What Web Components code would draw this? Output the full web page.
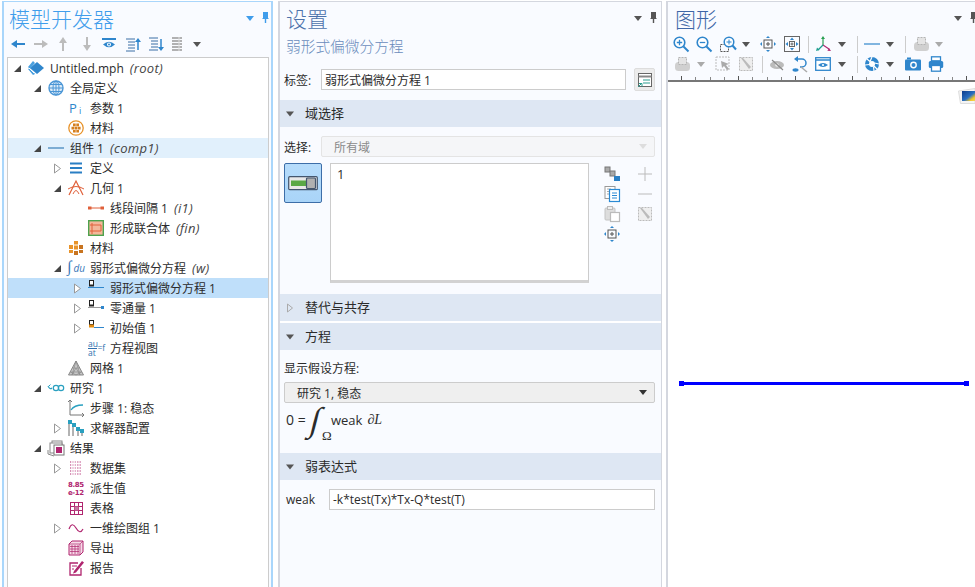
<!DOCTYPE html>
<html lang="zh-CN"><head><meta charset="utf-8"><title>COMSOL</title>
<style>
html,body{margin:0;padding:0;background:#fff;overflow:hidden}
body{font:12px "Open Sans","Noto Sans CJK SC",sans-serif;color:#2b2b2b}
</style></head><body>
<app-shell>
  <side-panel slot="left" title-text="模型开发器" active>
    <tool-bar slot="tools" start="4" items="back@18 fwd@41 up@63 down@87 eye@109 listup@133 listdown@156 listgray@178 caret@197"></tool-bar>
    <model-tree>
      <tree-row level="0" arrow="open" icon="root" tag="(root)">Untitled.mph</tree-row>
      <tree-row level="1" arrow="open" icon="globe">全局定义</tree-row>
      <tree-row level="2" icon="pi">参数 1</tree-row>
      <tree-row level="2" icon="matc">材料</tree-row>
      <tree-row level="1" arrow="open" icon="line" tag="(comp1)" state="soft">组件 1</tree-row>
      <tree-row level="2" arrow="closed" icon="defs">定义</tree-row>
      <tree-row level="2" arrow="open" icon="geom">几何 1</tree-row>
      <tree-row level="3" icon="interval" tag="(i1)">线段间隔 1</tree-row>
      <tree-row level="3" icon="union" tag="(fin)">形成联合体</tree-row>
      <tree-row level="2" icon="mats">材料</tree-row>
      <tree-row level="2" arrow="open" icon="weak" tag="(w)">弱形式偏微分方程</tree-row>
      <tree-row level="3" arrow="closed" icon="wf" state="sel">弱形式偏微分方程 1</tree-row>
      <tree-row level="3" arrow="closed" icon="zf">零通量 1</tree-row>
      <tree-row level="3" arrow="closed" icon="init">初始值 1</tree-row>
      <tree-row level="3" icon="eqv">方程视图</tree-row>
      <tree-row level="2" icon="mesh">网格 1</tree-row>
      <tree-row level="1" arrow="open" icon="study">研究 1</tree-row>
      <tree-row level="2" icon="step">步骤 1: 稳态</tree-row>
      <tree-row level="2" arrow="closed" icon="solver">求解器配置</tree-row>
      <tree-row level="1" arrow="open" icon="results">结果</tree-row>
      <tree-row level="2" arrow="closed" icon="dataset">数据集</tree-row>
      <tree-row level="2" icon="derived">派生值</tree-row>
      <tree-row level="2" icon="table">表格</tree-row>
      <tree-row level="2" arrow="closed" icon="plot">一维绘图组 1</tree-row>
      <tree-row level="2" icon="export">导出</tree-row>
      <tree-row level="2" icon="report">报告</tree-row>
    </model-tree>
  </side-panel>
  <settings-panel slot="mid"></settings-panel>
  <graphics-panel slot="right"></graphics-panel>
</app-shell>
<script>
const B='#2f86cc',G='#bcbcbc',D='#555',R='#e0603a',M='#b0256f',O='#e8932a',T='#2aa0c0';
const DBOX=`<rect x="1.500" y=".500" width="4" height="4.500" fill="#fff" stroke="#222"/><rect x="1" y="5" width="5" height="1.500" fill="#222"/>`;
const ICONS={
back:`<path d="M15 8H5" stroke="${B}" stroke-width="2"/><path d="M1 8l6-4v8z" fill="${B}"/>`,
fwd:`<path d="M1 8h10" stroke="${G}" stroke-width="2"/><path d="M15 8l-6-4v8z" fill="${G}"/>`,
up:`<path d="M8 15V5" stroke="${G}" stroke-width="2"/><path d="M8 1L4 7h8z" fill="${G}"/>`,
down:`<path d="M8 1v10" stroke="${G}" stroke-width="2"/><path d="M8 15L4 9h8z" fill="${G}"/>`,
eye:`<path d="M1 3h14" stroke="${B}" stroke-width="2"/><path d="M2 8.500Q8 3 14 8.500 8 14 2 8.500z" fill="${B}"/><circle cx="8" cy="8.500" r="2" fill="#fff"/><circle cx="8" cy="8.500" r="1" fill="${B}"/>`,
listup:`<path d="M1 3h9M3 6h7M3 9h7M3 12h7M1 15h9" stroke="#3a6ea5" stroke-width="1"/><path d="M13 14V5" stroke="${B}" stroke-width="1.500"/><path d="M13 2l-3 4h6z" fill="${B}"/>`,
listdown:`<path d="M1 2h9M3 5h7M3 8h7M3 11h7M1 14h9" stroke="#3a6ea5" stroke-width="1"/><path d="M13 3v9" stroke="${B}" stroke-width="1.500"/><path d="M13 15l-3-4h6z" fill="${B}"/>`,
listgray:`<path d="M2 2h10M2 5h10M2 8h10M2 11h10M2 14h10" stroke="#999" stroke-width="1.400"/><path d="M9 1v14" stroke="#ddd"/>`,
caret:`<path d="M0 1h8L4 6z" fill="#555"/>`,
caretg:`<path d="M0 1h8L4 6z" fill="#aaa"/>`,
pin:`<path d="M2 0h5v6l1 1H5.200v4H3.800V7H1l1-1z" fill="#555"/>`,
pinb:`<path d="M2 0h5v6l1 1H5.200v4H3.800V7H1l1-1z" fill="#3f9deb"/>`,
caretb:`<path d="M0 1h8L4 6z" fill="#3f9deb"/>`,
root:`<path d="M9 2l7 6-7 6-7-6z" fill="${B}"/><path d="M5 1L0 7l2 2 5-6zM0 9l5 6 2-1-5-6z" fill="#4aa0df"/><path d="M1 8l5 5" stroke="#fff"/>`,
globe:`<circle cx="8" cy="8" r="7" fill="#dcebf8" stroke="#4a96d6" stroke-width="1.400"/><ellipse cx="8" cy="8" rx="3" ry="7" fill="none" stroke="#4a96d6"/><path d="M1 8h14M2 4.500h12M2 11.500h12M8 1v14" stroke="#4a96d6"/>`,
pi:`<text x="1" y="13" font-family="Open Sans" font-size="13" fill="${B}">P</text><text x="11" y="14" font-family="Open Sans" font-size="9" fill="${B}">i</text>`,
matc:`<circle cx="8" cy="8" r="7.200" fill="#fff" stroke="${O}" stroke-width="1.300"/><path d="M5 3.500h2.700v2.700H5zM8.300 3.500H11v2.700H8.300zM3.500 6.700h2.700v2.700H3.500zM6.700 6.700h2.700v2.700H6.700zM9.900 6.700h2.700v2.700H9.900zM5 9.900h2.700v2.700H5zM8.300 9.900H11v2.700H8.300z" fill="#d57f1f"/>`,
line:`<path d="M0 8h16" stroke="#3a7fb8" stroke-width="1.200"/>`,
defs:`<path d="M2 3.500h12M2 8h12M2 12.500h12" stroke="#2a7fc4" stroke-width="2"/>`,
geom:`<path d="M1 15L8 1l7 14" fill="none" stroke="${R}" stroke-width="1.200"/><path d="M0 9q8-5 16 0" fill="none" stroke="${R}"/><path d="M5 14q3-7 6 0" fill="none" stroke="${R}"/>`,
interval:`<path d="M2 8h13" stroke="${R}"/><rect x="0" y="6.500" width="3.500" height="3" fill="${R}"/><rect x="12.500" y="6.500" width="3.500" height="3" fill="${R}"/>`,
union:`<rect x=".700" y=".700" width="14.600" height="14.600" fill="#f4b79a" stroke="#4ea24e" stroke-width="1.400"/><path d="M2 5h11v6H2M4 3v11" fill="none" stroke="${R}"/>`,
mats:`<path d="M6 1h4v3.600H6zM1 5h4v4H1zM6 5.500h4v4H6zM11 5h4v4h-4zM1 10h4v3H1zM6 11h4v4H6zM11 10h4v3h-4z" fill="${O}"/><path d="M6 11h4v4H6zM11 10h4v3h-4zM11 5h4v4h-4z" fill="#c87420"/>`,
weak:`<text x="-1" y="12" font-family="Liberation Serif" font-style="italic" font-size="16" fill="#3a78b8">∫</text><text x="5.500" y="12" font-family="Open Sans" font-style="italic" font-size="10" fill="#3a78b8">du</text>`,
wf:`${DBOX}<path d="M0 7.500h16" stroke="${B}"/>`,
zf:`${DBOX}<path d="M0 7.500h13" stroke="#999"/><rect x="13" y="6" width="3" height="3" fill="${B}"/>`,
init:`<rect x="1.500" y=".500" width="4" height="4" fill="#fff" stroke="#222"/><rect x="1" y="4.500" width="5" height="3" fill="#e08a10"/><path d="M6 7.500h10" stroke="${B}"/>`,
eqv:`<text x="0" y="7" font-family="Open Sans" font-size="8.500" fill="#2f6fae">au</text><path d="M0 8.500h9" stroke="#2f6fae"/><text x="0" y="16" font-family="Open Sans" font-size="8.500" fill="#2f6fae">at</text><text x="9.500" y="11" font-family="Open Sans" font-size="8.500" fill="#2f6fae">=f</text>`,
mesh:`<path d="M8 1L15.500 15H.500z" fill="#c8c8c8" stroke="#888"/><path d="M8 1L4 15M8 1l4 14M4.500 8h7M2.500 12h11M4 15l4-7 4 7M2.500 12L8 15l5.500-3" fill="none" stroke="#8a8a8a" stroke-width=".700"/>`,
study:`<path d="M0 6q2 4 4 2" fill="none" stroke="${T}" stroke-width="1.200"/><circle cx="8" cy="8" r="2.700" fill="none" stroke="${T}" stroke-width="1.200"/><circle cx="13" cy="8" r="2.700" fill="none" stroke="${T}" stroke-width="1.200"/><path d="M1 6l1.500-1.500" stroke="${T}"/>`,
step:`<path d="M2 0v15h14" fill="none" stroke="#777"/><path d="M0 2l2-2 2 2M14 13l2 2-2 2" fill="none" stroke="#777"/><path d="M3 10Q6 5 15 5" fill="none" stroke="${T}" stroke-width="1.300"/>`,
solver:`<path d="M1 4v12M5 4v12M10 9v7M14 13v3" stroke="#666"/><rect x="0" y="0" width="4" height="4" fill="${T}"/><rect x="4" y="3" width="4" height="4" fill="${T}"/><rect x="8" y="7" width="4" height="4" fill="${T}"/><rect x="12" y="9" width="4" height="4" fill="${T}"/>`,
results:`<rect x="4" y="1" width="10" height="9" fill="#fff" stroke="#888"/><rect x="2" y="3" width="12" height="10" fill="#fff" stroke="#888"/><rect x="6" y="5" width="10" height="10" fill="#fff" stroke="#777"/><rect x="8" y="7" width="6" height="6" fill="${M}"/><path d="M0 10v4l6 2" fill="none" stroke="#888"/>`,
dataset:`<path d="M2 2h12M2 5h12M2 8h12M2 11h12M2 14h12" stroke="${M}" stroke-width="1.200" stroke-dasharray="1.200 1.200"/><path d="M5 1v14M8 1v14" stroke="#fff" stroke-width=".600"/>`,
derived:`<text x="0" y="7" font-family="DejaVu Sans" font-weight="bold" font-size="7" fill="${M}" textLength="16">8.85</text><text x="0" y="15" font-family="DejaVu Sans" font-weight="bold" font-size="7" fill="${M}" textLength="16">e-12</text>`,
table:`<rect x="2.500" y="2.500" width="12" height="12" fill="none" stroke="${M}"/><path d="M2.500 6.500h12M2.500 10.500h12M6.500 2.500v12M10.500 2.500v12" stroke="${M}"/><rect x="6.500" y="6.500" width="4" height="4" fill="#c77aa5"/>`,
plot:`<path d="M1 9Q4 1 8 8t7 1" fill="none" stroke="${M}" stroke-width="1.200"/>`,
export:`<path d="M1 4l3-3h11v11l-3 3H1z" fill="#f6dbe8" stroke="${M}"/><path d="M1 4h11v11M12 4l3-3M2 6.500h9M2 9h9M2 11.500h9M4 5v9M7 5v9M10 5v9" stroke="${M}" stroke-width=".700" fill="none"/>`,
report:`<path d="M13 8v7H2V3h8" fill="none" stroke="${M}" stroke-width="1.300"/><path d="M6 11L14 1l2 1.500L8 12.500l-3 1z" fill="${M}"/><path d="M4 6h5M4 9h2" stroke="${M}"/>`,
notes:`<rect x="1.500" y="1.500" width="13" height="13" fill="#fff" stroke="#666"/><path d="M1.500 4.500h13" stroke="#888" stroke-width="2"/><path d="M6 8h7M6 11h7" stroke="#2a9d8f" stroke-width="1.200"/><path d="M1 15l3-3M2 11.500h3v3" stroke="#2a9d8f" fill="none"/>`,
domain:`<rect x=".700" y=".700" width="28.600" height="13" rx="1" fill="#e8e8e8" stroke="#44566e" stroke-width="1.200"/><rect x="3" y="4.500" width="16" height="5.500" fill="#5aa845"/><rect x="18.500" y="2" width="9" height="10.500" rx="1" fill="#b0b0b0" stroke="#44566e" stroke-width="1.200"/>`,
chain:`<rect x="1" y="1" width="5" height="5" fill="#aaa" stroke="#777"/><rect x="6" y="5" width="5" height="5" fill="#aaa" stroke="#777"/><rect x="10" y="10" width="6" height="5" fill="#2a7fc4"/>`,
copy:`<rect x="1" y=".500" width="10" height="12" fill="#fff" stroke="#999"/><path d="M3 3h4M3 5.500h4M3 8h4" stroke="#aaa"/><rect x="5.500" y="3.500" width="10" height="12" fill="#fff" stroke="#2a8ad4" stroke-width="1.200"/><path d="M8 7h5M8 9.500h5M8 12h5" stroke="#2a8ad4"/>`,
paste:`<rect x="1" y="2" width="10" height="12" rx="1" fill="#ddd" stroke="#c4c4c4"/><rect x="3.500" y=".500" width="5" height="3" fill="#eee" stroke="#bbb"/><rect x="6.500" y="6.500" width="9" height="9" fill="#fff" stroke="#bbb" stroke-width="1.200"/>`,
zoomsel:`<rect x="4" y="4" width="8" height="8" fill="none" stroke="#555"/><path d="M8 6v4M6 8h4" stroke="#555"/><path d="M8 0l-2 2h4zM8 16l-2-2h4zM0 8l2-2v4zM16 8l-2-2v4z" fill="${B}"/>`,
plus:`<path d="M8 1v14M1 8h14" stroke="#bbb"/>`,
minus:`<path d="M1 8h14" stroke="#bbb"/>`,
clear:`<rect x="1.500" y="1.500" width="13" height="13" fill="#eee" stroke="#bbb" stroke-dasharray="2 1"/><path d="M3 2l8 11 2-2L5 2z" fill="#bbb"/>`,
zin:`<circle cx="6.500" cy="6.500" r="5.300" fill="#fff" stroke="${B}" stroke-width="1.600"/><path d="M10.500 10.500l5 5" stroke="${B}" stroke-width="2"/><path d="M6.500 3.800v5.400M3.800 6.500h5.400" stroke="${B}" stroke-width="1.300"/>`,
zout:`<circle cx="6.500" cy="6.500" r="5.300" fill="#fff" stroke="${B}" stroke-width="1.600"/><path d="M10.500 10.500l5 5" stroke="${B}" stroke-width="2"/><path d="M3.800 6.500h5.400" stroke="${B}" stroke-width="1.300"/>`,
zbox:`<rect x=".500" y="8.500" width="8" height="7" fill="none" stroke="#555" stroke-dasharray="2 1"/><circle cx="9" cy="6" r="4.800" fill="#fff" stroke="${B}" stroke-width="1.500"/><path d="M12.500 9.500l3.500 4" stroke="${B}" stroke-width="2"/><path d="M9 3.500v5M6.500 6h5" stroke="${B}"/>`,
zext:`<rect x=".500" y=".500" width="15" height="15" fill="none" stroke="#666"/><path d="M8 1.500L6 4h4zM8 14.500L6 12h4zM1.500 8L4 6v4zM14.500 8L12 6v4z" fill="${B}"/><rect x="5.500" y="5.500" width="5" height="5" fill="none" stroke="#666"/><path d="M8 6.500v3M6.500 8h3" stroke="#666"/>`,
axes:`<path d="M8 9V2" stroke="#2aa052" stroke-width="1.200"/><path d="M8 0L6 3h4z" fill="#2aa052"/><path d="M8 9l6 4" stroke="${M}" stroke-width="1.200"/><path d="M16 15l-3.600-.200 1.600-2.800z" fill="${M}"/><path d="M8 9l-5 5" stroke="#1e9e8f" stroke-width="1.200"/><path d="M1 15l1-3.500 2.500 2.500z" fill="#1e9e8f"/>`,
sline:`<path d="M0 8h16" stroke="${B}" stroke-width="1.200"/>`,
lights:`<rect x="1" y="6" width="15" height="9" rx="3.500" fill="#d0d0d0"/><rect x="4.500" y="1.500" width="8" height="7" fill="#e4e4e4" stroke="#b4b4b4" stroke-dasharray="2 1"/>`,
selbox:`<rect x="1" y="1" width="13" height="13" fill="none" stroke="#bbb" stroke-dasharray="2 1"/><path d="M6 5l8 3-3 1 3 4-2 1-3-4-2 2z" fill="#aaa"/>`,
hide:`<ellipse cx="8" cy="9" rx="7" ry="4" fill="#bbb"/><circle cx="8" cy="9" r="1.800" fill="#eee"/><path d="M3 4l11 10" stroke="#8a8a8a" stroke-width="1.200"/>`,
reset:`<path d="M5 3h5a4 4 0 0 1 0 8H8" fill="none" stroke="${B}" stroke-width="1.500"/><path d="M6 0L2 3l4 3z" fill="${B}"/><ellipse cx="3.500" cy="14" rx="3" ry="1.700" fill="${B}"/><path d="M9 11l6 5" stroke="#aaa" stroke-width="1.500"/>`,
view:`<rect x=".700" y="1.700" width="14.600" height="12.600" fill="#fff" stroke="${B}" stroke-width="1.300"/><path d="M1 4h14" stroke="${B}" stroke-width="1.500"/><path d="M3 9q5-4 10 0-5 4-10 0z" fill="${B}"/><circle cx="8" cy="9" r="1.100" fill="#fff"/>`,
aperture:`<circle cx="8" cy="8" r="7" fill="${B}"/><circle cx="8" cy="8" r="3" fill="#fff"/><path d="M8 1L6 5.500M15 8l-4.500-1M10 15l-.500-4.500M1 9l4.500-.500M3 3l3.500 3M13 13l-3-3" stroke="#fff" stroke-width="1.200"/>`,
camera:`<rect x="0" y="3.500" width="16" height="11" rx="1" fill="${B}"/><rect x="2" y="1.500" width="4" height="2" fill="${B}"/><circle cx="8.500" cy="9" r="3.400" fill="#fff"/><circle cx="8.500" cy="9" r="2" fill="${B}"/>`,
print:`<rect x="3.500" y=".800" width="9" height="4" fill="#fff" stroke="${B}" stroke-width="1.300"/><rect x=".800" y="5" width="14.400" height="7" rx="1.500" fill="${B}"/><rect x="3.500" y="9.500" width="9" height="5.700" fill="#fff" stroke="${B}" stroke-width="1.300"/>`,
};
const WIDE={caret:8,caretg:8,caretb:8,pin:9,pinb:9,sep:1,domain:30};
const svg=(n,w=16,h=16)=>`<svg xmlns="http://www.w3.org/2000/svg" width="${w}" height="${h}" viewBox="0 0 ${w} ${h}" style="display:block;overflow:visible">${ICONS[n]||''}</svg>`;

class UiIcon extends HTMLElement{constructor(){super();this.attachShadow({mode:'open'})}
 connectedCallback(){const n=this.getAttribute('name');const w=+this.getAttribute('w')||WIDE[n]||16;const h=+this.getAttribute('h')||(n.startsWith('caret')?7:16);
 this.shadowRoot.innerHTML=`<style>:host{display:block;flex:none;width:${w}px;height:${h}px}</style>${svg(n,w,h)}`}}
customElements.define('ui-icon',UiIcon);

class ToolBar extends HTMLElement{constructor(){super();this.attachShadow({mode:'open'})}
 connectedCallback(){const start=+this.getAttribute('start')||0;let x=start,out='';
 for(const it of this.getAttribute('items').split(/\s+/)){const [n,c]=it.split('@');const cx=+c;
  if(n==='sep'){const m=cx-x;out+=`<i class="sep" style="margin-left:${m}px"></i>`;x=cx+1;continue}
  const w=WIDE[n]||16;const m=cx-w/2-x;out+=`<ui-icon name="${n}" style="margin-left:${m}px"></ui-icon>`;x=cx+w/2}
 this.shadowRoot.innerHTML=`<style>:host{display:flex;align-items:center;height:20px}
 .sep{display:block;flex:none;width:1px;height:17px;background:#ccc}</style>${out}`}}
customElements.define('tool-bar',ToolBar);

class AppShell extends HTMLElement{constructor(){super();this.attachShadow({mode:'open'}).innerHTML=`<style>
 :host{display:flex;width:975px;height:587px;padding:1px 0 0 2px;box-sizing:border-box;overflow:hidden;align-items:stretch}
 ::slotted([slot=left]){flex:none}</style><slot name="left"></slot><slot name="mid"></slot><slot name="right"></slot>`}}
customElements.define('app-shell',AppShell);

class PanelTitle extends HTMLElement{constructor(){super();this.attachShadow({mode:'open'})}
 connectedCallback(){const c=this.getAttribute('color');const pad=this.getAttribute('pad')||'8';const b=this.hasAttribute('blue');const rp=this.getAttribute('rp')||'0';
 this.shadowRoot.innerHTML=`<style>:host{display:flex;align-items:center;height:32px;padding:0 0 0 ${pad}px;font-size:21px;color:${c};overflow:hidden}
 span{flex:1;white-space:nowrap;font-family:"Noto Sans CJK SC",sans-serif;font-weight:300;line-height:32px}
 .r{display:flex;gap:7px;align-items:center;margin-right:${rp}px}</style><span><slot></slot></span><div class="r"><ui-icon name="${b?'caretb':'caret'}"></ui-icon><ui-icon name="${b?'pinb':'pin'}" h="12"></ui-icon></div>`}}
customElements.define('panel-title',PanelTitle);

class SidePanel extends HTMLElement{constructor(){super();this.attachShadow({mode:'open'})}
 connectedCallback(){this.shadowRoot.innerHTML=`<style>:host{display:flex;flex-direction:column;width:271px;box-sizing:border-box;border:1px solid #a9d6fb;border-width:1px 2px 0 2px;background:#f9fbff}
 </style><panel-title color="#3f9deb" pad="5" rp="1" blue>${this.getAttribute('title-text')}</panel-title><slot name="tools"></slot><div style="height:3px"></div><slot></slot>`}}
customElements.define('side-panel',SidePanel);

class ModelTree extends HTMLElement{constructor(){super();this.attachShadow({mode:'open'}).innerHTML=`<style>:host{display:block;flex:1;margin:0 2px 0 3px;background:#fff;border:1px solid #ccc;border-bottom:0;overflow:hidden}
 </style><slot></slot>`}}
customElements.define('model-tree',ModelTree);

class TreeRow extends HTMLElement{constructor(){super();this.attachShadow({mode:'open'})}
 connectedCallback(){const l=+this.getAttribute('level')||0,a=this.getAttribute('arrow'),ic=this.getAttribute('icon'),tag=this.getAttribute('tag'),st=this.getAttribute('state');
 const arrow=a==='open'?'<svg width="9" height="9"><path d="M8 1v7H1z" fill="#444"/></svg>':a==='closed'?'<svg width="9" height="11"><path d="M1.500 1l6 4.500-6 4.500z" fill="#fff" stroke="#999"/></svg>':'';
 const bg=st==='sel'?'#bfdffa':st==='soft'?'#e1f0fc':'transparent';
 this.shadowRoot.innerHTML=`<style>:host{display:flex;align-items:center;height:20px;background:${bg};padding-left:${2+l*20}px;white-space:nowrap;color:#2b2b2b}
 .a{width:15px;flex:none;display:flex;justify-content:center}
 ui-icon{margin:0 6px 0 3px}
 em{margin-left:6px;font-style:italic;color:#444;font-size:13px;letter-spacing:.3px}</style>
 <span class="a">${arrow}</span><ui-icon name="${ic}"></ui-icon><span><slot></slot></span>${tag?`<em>${tag}</em>`:''}`}}
customElements.define('tree-row',TreeRow);

class SectionHead extends HTMLElement{constructor(){super();this.attachShadow({mode:'open'})}
 connectedCallback(){const closed=this.hasAttribute('closed');
 this.shadowRoot.innerHTML=`<style>:host{display:flex;align-items:center;height:27px;box-sizing:border-box;padding:0 0 2px 6px;background:#dee7f3;color:#2b2b2b;font-size:13px}
 i{width:19px;flex:none;display:flex;margin-top:2px}</style>
 <i>${closed?'<svg width="8" height="10"><path d="M1.500 1l5 4-5 4z" fill="none" stroke="#aaa"/></svg>':'<svg width="8" height="6"><path d="M0 .500h8L4 5.500z" fill="#555"/></svg>'}</i><span><slot></slot></span>`}}
customElements.define('section-head',SectionHead);

class TextBox extends HTMLElement{constructor(){super();this.attachShadow({mode:'open'}).innerHTML=`<style>:host{display:flex;align-items:center;height:21px;box-sizing:border-box;background:#fff;border:1px solid #ccc;padding-left:3px;flex:1;min-width:0;white-space:nowrap;color:#2b2b2b}</style><slot></slot>`}}
customElements.define('text-box',TextBox);

class SelectBox extends HTMLElement{constructor(){super();this.attachShadow({mode:'open'})}
 connectedCallback(){const dis=this.hasAttribute('disabled');
 this.shadowRoot.innerHTML=`<style>:host{display:flex;align-items:center;height:21px;box-sizing:border-box;border:1px solid ${dis?'#e4e4e4':'#ccc'};border-radius:2px;background:${dis?'#f5f6f8':'#efefef'};padding:0 7px 0 12px;flex:1;color:${dis?'#8a8a8a':'#2b2b2b'}}
 span{flex:1}svg{display:block}</style><span><slot></slot></span><svg width="8" height="5"><path d="M0 0h8L4 5z" fill="${dis?'#ddd':'#333'}"/></svg>`}}
customElements.define('select-box',SelectBox);

class SettingsPanel extends HTMLElement{constructor(){super();this.attachShadow({mode:'open'}).innerHTML=`<style>
 :host{display:flex;flex-direction:column;flex:none;width:384px;margin-left:5px;box-sizing:border-box;border:1px solid #d4d7df;border-width:1px 1px 0 2px;background:#f9fbff;color:#2b2b2b}
 .sub{height:18px;line-height:18px;margin-top:3px;padding-left:6px;font-size:14.700px;color:#6a8cbc;font-family:"Noto Sans CJK SC",sans-serif;font-weight:300}
 .lab{display:flex;align-items:center;gap:9px;margin:13px 6px 9px 4px;height:23px}
 .lab b{font-weight:400;width:28px;flex:none}
 .btn{flex:none;width:21px;height:23px;margin-left:-1px;background:#ececec;border:1px solid #ddd;box-sizing:border-box;border-radius:2px;display:flex;align-items:center;justify-content:center}
 .pad{padding:9px 6px 11px 4px}
 .sel{display:flex;align-items:center;gap:9px}.sel b{font-weight:400;width:28px;flex:none}
 .row{display:flex;margin-top:6px;height:120px}
 .tog{flex:none;width:38px;height:40px;box-sizing:border-box;background:linear-gradient(#b6dcfb,#a9d4f8);border:1px solid #3d6ea8;border-radius:2px;display:flex;justify-content:center;padding-top:12px}
 .list{flex:none;width:259px;margin-left:8px;box-sizing:border-box;background:#fff;border:1px solid #ccc;border-bottom:3px solid #d2d2d2;padding:1px 6px;font-size:13px}
 .col{flex:none;display:grid;grid-template-columns:16px 16px;gap:4px 17px;margin:3px 0 0 15px;grid-auto-rows:16px}
 .p2{padding:9px 6px 0 4px}.p2 .cap{height:20px;line-height:20px}
 .p2 select-box{margin-top:3px}
 .eq{height:50px;display:flex;align-items:flex-start;font-size:13px;line-height:18px;padding:8px 0 0 2px;box-sizing:border-box;position:relative}
 .eq .z{width:22px;flex:none;font-size:14px;white-space:nowrap}
 .eq .int{font:italic 34px/30px "Liberation Serif",serif;margin:-6px 0 0 3px;width:20px;flex:none;transform:skewX(-14deg)}
 .eq sub{font:13px/13px "Liberation Serif",serif;position:absolute;left:38px;top:26px}
 .eq em{font:italic 14px/18px "Liberation Serif",serif;margin-left:5px}
 .w{display:flex;align-items:center;padding:9px 6px 0 6px}.w span{width:43px;flex:none}
 </style>
 <panel-title color="#4c72ab" pad="6" rp="3">设置</panel-title>
 <div class="sub">弱形式偏微分方程</div>
 <div class="lab"><b>标签:</b><text-box>弱形式偏微分方程 1</text-box><div class="btn"><ui-icon name="notes"></ui-icon></div></div>
 <section-head>域选择</section-head>
 <div class="pad">
  <div class="sel"><b>选择:</b><select-box disabled>所有域</select-box></div>
  <div class="row"><div class="tog"><ui-icon name="domain" h="15"></ui-icon></div><div class="list">1</div>
   <div class="col"><ui-icon name="chain"></ui-icon><ui-icon name="plus"></ui-icon><ui-icon name="copy"></ui-icon><ui-icon name="minus"></ui-icon><ui-icon name="paste"></ui-icon><ui-icon name="clear"></ui-icon><ui-icon name="zoomsel"></ui-icon></div></div>
 </div>
 <section-head closed>替代与共存</section-head>
 <div style="height:2px;background:#fff"></div>
 <section-head>方程</section-head>
 <div class="p2"><div class="cap">显示假设方程:</div><select-box>研究 1, 稳态</select-box>
  <div class="eq"><span class="z">0 =</span><span class="int">∫</span><sub>Ω</sub><span>weak</span><em>∂L</em></div></div>
 <section-head>弱表达式</section-head>
 <div class="w"><span>weak</span><text-box>-k*test(Tx)*Tx-Q*test(T)</text-box></div>`}}
customElements.define('settings-panel',SettingsPanel);

class GraphicsPanel extends HTMLElement{constructor(){super();this.attachShadow({mode:'open'})}
 connectedCallback(){let ticks='';for(let i=0;i<23;i++){const x=13+i*14.25;const maj=i%4===0;ticks+=`<path d="M${Math.round(x)}.5 ${maj?3:4}V7" stroke="${maj?'#555':'#888'}"/>`}
 this.shadowRoot.innerHTML=`<style>:host{display:flex;flex-direction:column;flex:1;min-width:0;margin-left:4px;box-sizing:border-box;border:1px solid #d4d7df;border-width:1px 0 0 2px;background:#f9fbff}
 .canvas{flex:1;background:#fff;position:relative}
 .ruler{display:block;height:9px;margin-top:-1px}
 .badge{position:absolute;right:0;top:6px;width:17px;height:16px}
 .plot{position:absolute;left:11px;top:298px;width:290px;height:7px}
 </style>
 <panel-title color="#3e66a6" pad="7" rp="-3">图形</panel-title>
 <tool-bar start="668" items="zin@681 zout@704 zbox@728 caret@746 zoomsel@768 zext@792 sep@808 axes@823 caret@842 sep@857 sline@872 caret@890 sep@905 lights@921 caretg@939"></tool-bar>
 <tool-bar start="668" items="lights@682 caretg@701 selbox@723 clear@746 sep@762 hide@777 reset@800 view@823 caret@842 sep@857 aperture@872 caret@890 camera@913 print@936"></tool-bar>
 <svg class="ruler" width="309" height="9">${ticks}<path d="M0 8h309" stroke="#777" stroke-width="2"/></svg>
 <div class="canvas">
  <svg class="badge" viewBox="0 0 17 16"><defs><linearGradient id="s" x1="0" y1="0" x2="1" y2="1"><stop offset="0" stop-color="#0d3c8c"/><stop offset=".55" stop-color="#2a6fc0"/><stop offset=".8" stop-color="#f2c62a"/><stop offset="1" stop-color="#f4d85a"/></linearGradient></defs><path d="M.500 3L17 .500V15.500H2.500z" fill="#f4f4f4" stroke="#ddd"/><rect x="4" y="3" width="13" height="10" fill="url(#s)"/></svg>
  <svg class="plot" viewBox="0 0 290 7"><rect x="0" y="1" width="5" height="5" fill="#00f"/><rect x="2" y="2" width="286" height="3" fill="#00f"/><rect x="285" y="1" width="5" height="5" fill="#00f"/></svg>
 </div>`}}
customElements.define('graphics-panel',GraphicsPanel);
</script>
</body></html>
